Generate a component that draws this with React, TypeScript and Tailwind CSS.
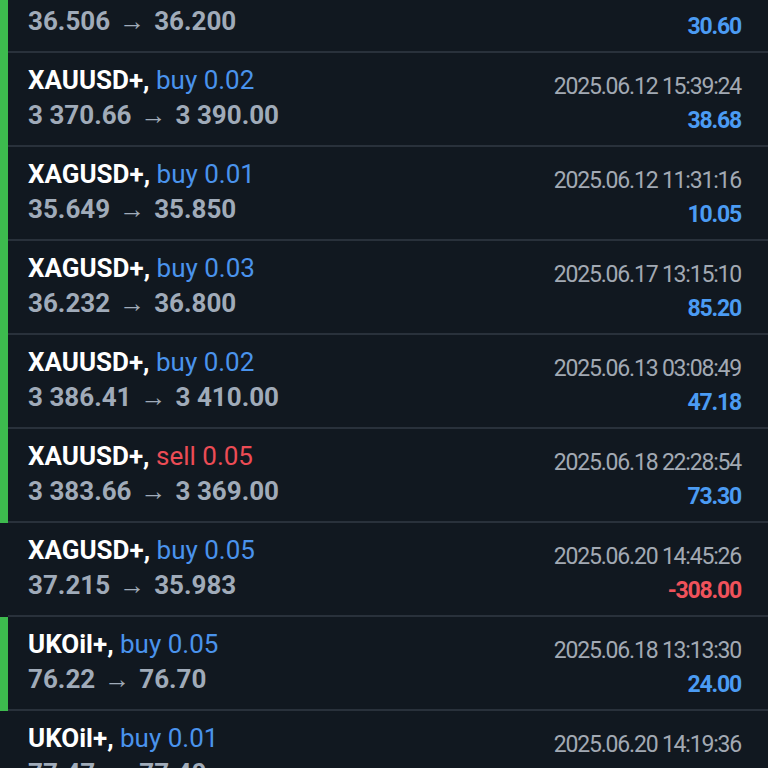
type Deal = {
  symbol: string
  side: 'buy' | 'sell'
  lots: string
  open: string
  close: string
  time: string
  profit: string
  marked: boolean
}

const deals: Deal[] = [
  { symbol: 'XAGUSD+', side: 'sell', lots: '0.02', open: '36.506', close: '36.200', time: '2025.06.11 10:42:05', profit: '30.60', marked: true },
  { symbol: 'XAUUSD+', side: 'buy', lots: '0.02', open: '3 370.66', close: '3 390.00', time: '2025.06.12 15:39:24', profit: '38.68', marked: true },
  { symbol: 'XAGUSD+', side: 'buy', lots: '0.01', open: '35.649', close: '35.850', time: '2025.06.12 11:31:16', profit: '10.05', marked: true },
  { symbol: 'XAGUSD+', side: 'buy', lots: '0.03', open: '36.232', close: '36.800', time: '2025.06.17 13:15:10', profit: '85.20', marked: true },
  { symbol: 'XAUUSD+', side: 'buy', lots: '0.02', open: '3 386.41', close: '3 410.00', time: '2025.06.13 03:08:49', profit: '47.18', marked: true },
  { symbol: 'XAUUSD+', side: 'sell', lots: '0.05', open: '3 383.66', close: '3 369.00', time: '2025.06.18 22:28:54', profit: '73.30', marked: true },
  { symbol: 'XAGUSD+', side: 'buy', lots: '0.05', open: '37.215', close: '35.983', time: '2025.06.20 14:45:26', profit: '-308.00', marked: false },
  { symbol: 'UKOil+', side: 'buy', lots: '0.05', open: '76.22', close: '76.70', time: '2025.06.18 13:13:30', profit: '24.00', marked: true },
  { symbol: 'UKOil+', side: 'buy', lots: '0.01', open: '77.47', close: '77.40', time: '2025.06.20 14:19:36', profit: '-0.70', marked: false },
]

const DealRow = ({ deal }: { deal: Deal }) => {
  const loss = deal.profit.startsWith('-')
  return (
    <div className="flex h-[94px]">
      <div className={deal.marked ? 'w-[8px] shrink-0 bg-[#3dba4e]' : 'w-[8px] shrink-0'} />
      <div className="flex flex-1 justify-between border-b-2 border-[#29313b] pl-[20px] pr-[27px]">
        <div className="pt-[10px] text-[26px] leading-[35px]">
          <div className="whitespace-nowrap">
            <span className="font-bold text-white">{deal.symbol},</span>{' '}
            <span className={deal.side === 'buy' ? 'text-[#4a93ec]' : 'text-[#ec4c55]'}>
              {deal.side} {deal.lots}
            </span>
          </div>
          <div className="flex items-baseline whitespace-nowrap font-bold text-[#a0abb9]">
            <span>{deal.open}</span>
            <span className="px-[9px] text-[26px] font-normal">→</span>
            <span>{deal.close}</span>
          </div>
        </div>
        <div className="pt-[17px] text-right text-[23px] leading-[34px] tracking-[-1.2px]">
          <div className="text-[#a2a9b3]">{deal.time}</div>
          <div className={loss ? 'font-bold text-[#f0525b]' : 'font-bold text-[#4b9bf3]'}>{deal.profit}</div>
        </div>
      </div>
    </div>
  )
}

export default function App() {
  return (
    <div className="h-[768px] w-[768px] overflow-hidden bg-[#111820]" style={{ fontFamily: 'Roboto, "Noto Sans", sans-serif' }}>
      <div className="-mt-[41px]">
        {deals.map((d, i) => (
          <DealRow key={i} deal={d} />
        ))}
      </div>
    </div>
  )
}
